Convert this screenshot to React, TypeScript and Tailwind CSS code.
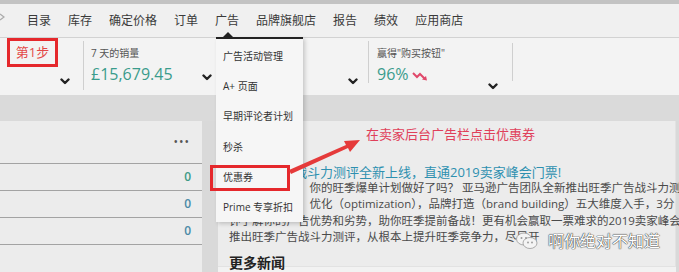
import React from "react";

const Chevron = () => (
  <svg width="10" height="7" viewBox="0 0 10 7">
    <polyline points="1.5,1.5 5,5 8.5,1.5" fill="none" stroke="#222" strokeWidth="2.4" strokeLinecap="round" strokeLinejoin="round" />
  </svg>
);

const navItems = ["目录", "库存", "确定价格", "订单", "广告", "品牌旗舰店", "报告", "绩效", "应用商店"];
const menuItems = ["广告活动管理", "A+ 页面", "早期评论者计划", "秒杀", "优惠券", "Prime 专享折扣"];

export default function App() {
  return (
    <div
      className="relative w-[679px] h-[272px] overflow-hidden bg-[#d9d9d9] text-[#333]"
      style={{ fontFamily: '"Open Sans", "Noto Sans CJK SC", sans-serif' }}
    >
      {/* top strip */}
      <div className="h-[4px] bg-[#c3c3c3]" />
      {/* nav */}
      <div className="h-[33px] bg-[#f0f0f0] flex items-center pl-[27px] gap-[17px] text-[12px] text-[#3a3a3a] relative">
        <svg className="absolute left-0 top-[9px]" width="6" height="8" viewBox="0 0 6 8">
          <polyline points="0,1 4,4 0,7" fill="none" stroke="#aaa" strokeWidth="1.2" />
        </svg>
        {navItems.map((n) => (
          <span key={n} className="leading-none">{n}</span>
        ))}
      </div>
      {/* metrics row */}
      <div className="h-[58px] bg-[#f3f3f3] border-t border-[#d2d2d2] flex">
        <div className="w-[83px] shrink-0 flex items-end justify-end pr-[13px] pb-[10px]">
          <Chevron />
        </div>
        <div className="w-[142px] shrink-0 border-l border-[#cfcfcf] mt-[3px] mb-[5px] flex flex-col pl-[7px] pr-[13px]">
          <div className="text-[10px] text-[#555] mt-[5px] leading-[14px]">7 天的销量</div>
          <div className="flex items-end justify-between">
            <span className="text-[16px] text-[#3a9c8c] leading-[22px] mt-[3px]">£15,679.45</span>
            <span className="mb-[4px]"><Chevron /></span>
          </div>
        </div>
        <div className="w-[143px] shrink-0 flex items-end justify-end pr-[10px] pb-[10px]">
          <Chevron />
        </div>
        <div className="w-[144px] shrink-0 border-l border-[#cfcfcf] mt-[3px] mb-[12px] flex flex-col pl-[8px] pr-[14px]">
          <div className="text-[10px] text-[#555] mt-[5px] leading-[14px]">赢得"购买按钮"</div>
          <div className="flex items-end justify-between">
            <span className="flex items-center">
              <span className="text-[16px] text-[#3a9c8c] leading-[22px] mt-[3px]">96%</span>
              <svg className="ml-[3px] mt-[6px]" width="16" height="10" viewBox="0 0 16 10">
                <polyline points="1,2 5,6 8,3 13,8" fill="none" stroke="#e0486a" strokeWidth="2" />
                <polygon points="10,8.5 15,9.5 14,5" fill="#e0486a" />
              </svg>
            </span>
            <span className="-mb-[5px]"><Chevron /></span>
          </div>
        </div>
        <div className="flex-1 border-l border-[#cfcfcf] mt-[5px] mb-[14px]" />
      </div>
      {/* gray band */}
      <div className="h-[26px] bg-[#dadada]" />
      {/* main */}
      <div className="flex h-[151px]">
        <div className="w-[202px] shrink-0 bg-[#ececec] flex flex-col">
          <div className="h-[42px] flex items-center justify-end pr-[12px] text-[#555] text-[12px] tracking-[1px]">
            •••
          </div>
          {["#3d9a86", "#4b89a6", "#4b89a6"].map((c, i) => (
            <div key={i} className="h-[27px] border-t border-[#a3a3a3] flex items-center justify-end pr-[11px] text-[12px] font-semibold" style={{ color: c }}>
              0
            </div>
          ))}
          <div className="h-[27px] border-t border-[#a3a3a3]" />
        </div>
        <div className="flex-1 min-w-0 ml-[16px] mr-[3px] flex flex-col">
          <div className="h-[146px] bg-[#ececec] border-b border-r border-[#e2e2e2] pl-[11px] pt-[43px] relative overflow-visible">
            <div className="text-[13px] leading-[16px] text-[#2e90b0] whitespace-nowrap">
              亚马逊广告战斗力测评全新上线，直通2019卖家峰会门票!
            </div>
            <div className="text-[11.5px] leading-[16.3px] text-[#4a4a4a] whitespace-nowrap">
              <div>旺季即将来临，你的旺季爆单计划做好了吗？ 亚马逊广告团队全新推出旺季广告战斗力测评</div>
              <div>从投放，转化，优化（optimization），品牌打造（brand building）五大维度入手，3分</div>
              <div>钟了解你的广告优势和劣势，助你旺季提前备战！更有机会赢取一票难求的2019卖家峰会</div>
              <div>推出旺季广告战斗力测评，从根本上提升旺季竞争力，尽早开</div>
            </div>
            <div className="mt-[9px] text-[14px] leading-[18px] text-[#222] font-semibold">更多新闻</div>
            {/* watermark */}
            <div className="absolute left-[298px] top-[110px] flex items-center">
              <svg width="22" height="18" viewBox="0 0 22 18">
                <ellipse cx="8" cy="7" rx="7.5" ry="6" fill="#f4f4f4" stroke="#999" strokeWidth="0.8" />
                <ellipse cx="14" cy="11" rx="7" ry="5.5" fill="#f4f4f4" stroke="#999" strokeWidth="0.8" />
                <circle cx="5.5" cy="6" r="1" fill="#999" />
                <circle cx="10" cy="6" r="1" fill="#999" />
                <circle cx="12" cy="10.5" r="0.9" fill="#999" />
                <circle cx="16" cy="10.5" r="0.9" fill="#999" />
              </svg>
              <span
                className="ml-[10px] text-[16px] leading-[20px] text-white whitespace-nowrap [text-shadow:0_0_1px_#444,0_0_1px_#444,0_0_1px_#444]"
              >
                啊你绝对不知道
              </span>
            </div>
          </div>
          <div className="flex-1 bg-[#f2f2f2]" />
        </div>
      </div>

      {/* 第1步 annotation */}
      <div className="absolute left-[7px] top-[38px] w-[51px] h-[29px] border-[3px] border-[#e5282c] flex items-center justify-center text-[13px] text-[#e34848] bg-[#f3f3f3]">
        第1步
      </div>

      {/* dropdown menu */}
      <div className="absolute left-[216px] top-[37px] w-[87px] h-[185px] bg-[#f6f6f6] border-t-2 border-[#222] shadow-[2px_2px_4px_rgba(0,0,0,0.18)] pt-[2px]">
        <svg className="absolute left-[6px] -top-[7px]" width="12" height="6" viewBox="0 0 12 6">
          <polygon points="0,6 6,0 12,6" fill="#222" />
        </svg>
        {menuItems.map((m) => (
          <div key={m} className="h-[30.3px] flex items-center pl-[7px] text-[10px] text-[#333] whitespace-nowrap">
            {m}
          </div>
        ))}
      </div>

      {/* red box around 优惠券 */}
      <div className="absolute left-[210px] top-[165px] w-[80px] h-[26px] border-[3px] border-[#e5282c]" />

      {/* arrow */}
      <svg className="absolute left-0 top-0" width="679" height="272" viewBox="0 0 679 272">
        <polygon points="289,170 291,174 348,148 350,152 360,140 344,141 346,145" fill="#e53a3a" />
      </svg>

      {/* red annotation text */}
      <div className="absolute left-[366px] top-[125px] text-[13px] leading-[18px] text-[#e0405a] whitespace-nowrap">
        在卖家后台广告栏点击优惠券
      </div>
    </div>
  );
}
